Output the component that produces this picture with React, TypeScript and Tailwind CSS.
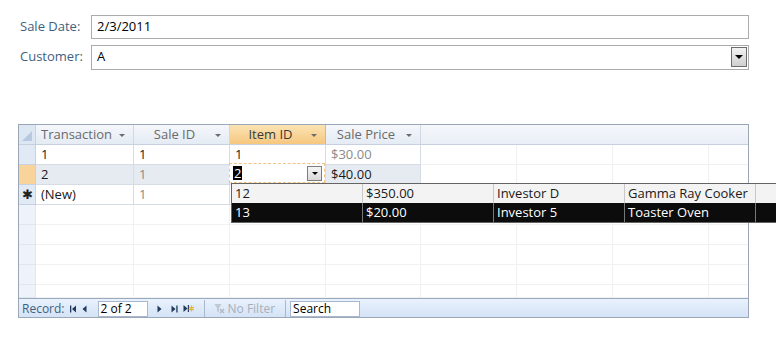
import React from "react";

const font = { fontFamily: '"Open Sans", "Noto Sans", sans-serif' };

function HeaderCell({ label, w, active, align = "center" }: { label: string; w: number; active?: boolean; align?: string }) {
  return (
    <div
      style={{ width: w }}
      className={`relative flex h-full shrink-0 items-center border-r ${active ? "border-[#e8b466] bg-gradient-to-b from-[#fbe3b4] to-[#f6c77e] text-[#3a3a3a]" : "border-[#d0d8e4] bg-gradient-to-b from-[#f4f7fb] to-[#e5ebf4] text-[#6a6a6a]"} ${align === "left" ? "justify-start pl-[5px]" : "justify-center pr-[14px]"}`}
    >
      <span>{label}</span>
      <span className="absolute right-[8px] top-[9px] h-0 w-0 border-x-[3px] border-t-[3px] border-x-transparent border-t-[#6a6a6a]" />
    </div>
  );
}

const cols = [98, 96, 96, 95];
const extra = [96, 96, 96, 40];

function DataRow({ vals, bg, selector, grey }: { vals: React.ReactNode[]; bg: string; selector: React.ReactNode; grey?: boolean[] }) {
  return (
    <div className="flex h-[20px] shrink-0">
      {selector}
      {cols.map((w, i) => (
        <div
          key={i}
          style={{ width: w }}
          className={`flex shrink-0 items-center border-b border-r border-[#d6dce6] pl-[5px] ${bg} ${grey && grey[i] ? "text-[#8a8a8a]" : "text-[#1a1a1a]"}`}
        >
          {vals[i]}
        </div>
      ))}
      {extra.map((w, i) => (
        <div key={i} style={{ width: w }} className="shrink-0 border-b border-r border-[#f0f0f0] bg-white" />
      ))}
    </div>
  );
}

function Sel({ kind }: { kind?: "active" | "new" }) {
  return (
    <div
      className={`flex h-full w-[17px] shrink-0 items-center justify-center border-b border-r border-[#c6d2e3] ${kind === "active" ? "bg-[#f8d49a]" : "bg-[#e1e9f5]"} text-[13px] text-[#222]`}
    >
      {kind === "new" ? "✱" : ""}
    </div>
  );
}

function BlankRow({ last }: { last?: boolean }) {
  return (
    <div className={`flex ${last ? "h-[13px]" : "h-[20px]"} shrink-0`}>
      <div className="h-full w-[17px] shrink-0 border-b border-r border-[#dfe6f0] bg-[#eef2f9]" />
      {[...cols, ...extra].map((w, i) => (
        <div key={i} style={{ width: w }} className="h-full shrink-0 border-b border-r border-[#f1f1f1] bg-white" />
      ))}
    </div>
  );
}

const navC = "#1f3a5c";

export default function App() {
  return (
    <div className="relative h-[343px] w-[776px] overflow-hidden bg-white text-[13px]" style={font}>
      <div className="flex flex-col gap-[6px] pl-[20px] pt-[15px]">
        <div className="flex h-[24px] items-center">
          <div className="w-[71px] text-[#3f5f80]">Sale Date:</div>
          <div className="flex h-[24px] w-[658px] items-center border border-[#ababab] pl-[5px] text-black">2/3/2011</div>
        </div>
        <div className="flex h-[24px] items-center">
          <div className="w-[71px] text-[#3f5f80]">Customer:</div>
          <div className="flex h-[25px] w-[658px] items-center justify-between border border-[#ababab] pl-[5px] pr-[1px] text-black">
            <span>A</span>
            <div className="flex h-[20px] w-[16px] items-center justify-center border border-[#6d6d6d] bg-gradient-to-b from-[#f2f2f2] to-[#cfcfcf]">
              <span className="h-0 w-0 border-x-[4px] border-t-[4px] border-x-transparent border-t-black" />
            </div>
          </div>
        </div>
      </div>

      <div className="ml-[18px] mt-[55px] flex h-[194px] w-[731px] flex-col overflow-hidden border border-[#9ba7b6] bg-white">
        <div className="flex h-[20px] shrink-0 border-b border-[#c6d0de]">
          <div className="relative h-full w-[17px] shrink-0 border-r border-[#c6d2e3] bg-[#dde6f3]">
            <svg className="absolute bottom-[3px] right-[3px]" width="10" height="10" viewBox="0 0 10 10">
              <path d="M10 0 L10 10 L0 10 Z" fill="#b7c8e0" />
            </svg>
          </div>
          <HeaderCell label="Transaction" w={98} align="left" />
          <HeaderCell label="Sale ID" w={96} />
          <HeaderCell label="Item ID" w={96} active />
          <HeaderCell label="Sale Price" w={95} />
          <div className="h-full flex-1 bg-gradient-to-b from-[#f4f7fb] to-[#eaeff7]" />
        </div>
        <DataRow selector={<Sel />} bg="bg-white" vals={["1", "1", "1", "$30.00"]} grey={[false, false, false, true]} />
        <DataRow selector={<Sel kind="active" />} bg="bg-[#e6eaf1]" vals={["2", "1", null, "$40.00"]} grey={[false, true, false, false]} />
        <DataRow selector={<Sel kind="new" />} bg="bg-white" vals={["(New)", "1", "", ""]} grey={[false, true, false, false]} />
        <BlankRow />
        <BlankRow />
        <BlankRow />
        <BlankRow />
        <BlankRow last />
        <div className="flex h-[20px] shrink-0 items-center border-t border-[#9aabc0] bg-gradient-to-b from-[#e9f2fd] to-[#d3e2f6] text-[12px] text-[#3f5f80]">
          <span className="ml-[3px]">Record:</span>
          <svg className="ml-[5px]" width="7" height="8" viewBox="0 0 7 8">
            <rect x="0" y="0.5" width="1.3" height="7" fill={navC} />
            <path d="M6 0.5 L6 7.5 L2 4 Z" fill={navC} />
          </svg>
          <svg className="ml-[5px]" width="5" height="8" viewBox="0 0 5 8">
            <path d="M4.5 0.5 L4.5 7.5 L0.5 4 Z" fill={navC} />
          </svg>
          <div className="ml-[11px] flex h-[16px] w-[50px] items-center border border-[#a9b8cc] bg-white pl-[2px] text-black">2 of 2</div>
          <svg className="ml-[9px]" width="5" height="8" viewBox="0 0 5 8">
            <path d="M0.5 0.5 L0.5 7.5 L4.5 4 Z" fill={navC} />
          </svg>
          <svg className="ml-[9px]" width="7" height="8" viewBox="0 0 7 8">
            <path d="M0.5 0.5 L0.5 7.5 L4.5 4 Z" fill={navC} />
            <rect x="5.3" y="0.5" width="1.3" height="7" fill={navC} />
          </svg>
          <svg className="ml-[5px]" width="11" height="9" viewBox="0 0 11 9">
            <path d="M0.5 1 L0.5 8 L4.5 4.5 Z" fill={navC} />
            <rect x="4.8" y="1" width="1.2" height="7" fill={navC} />
            <path d="M8.5 1.5 L8.5 7.5 M5.8 3 L11 6 M5.8 6 L11 3" stroke="#e9b52e" strokeWidth="1.3" />
          </svg>
          <div className="ml-[10px] h-[18px] w-px bg-[#a9b8cc]" />
          <svg className="ml-[9px]" width="11" height="11" viewBox="0 0 11 11">
            <path d="M0.5 1 L7.5 1 L5 5 L5 9.5 L3 8 L3 5 Z" fill="#c2c9d3" />
            <path d="M6 6 L10 10 M10 6 L6 10" stroke="#b0b8c4" strokeWidth="1.4" />
          </svg>
          <span className="ml-[3px] text-[#a7afba]">No Filter</span>
          <div className="ml-[10px] h-[18px] w-px bg-[#a9b8cc]" />
          <div className="ml-[4px] flex h-[16px] w-[70px] items-center border border-[#a9b8cc] bg-white pl-[2px] text-black">Search</div>
        </div>
      </div>

      {/* active Item ID cell editor */}
      <div className="absolute left-[229px] top-[163px] flex h-[20px] w-[96px] items-center border border-dashed border-[#f0c486] bg-white pl-[3px]">
        <span className="bg-black px-[1px] leading-[14px] text-white">2</span>
        <div className="absolute right-[2px] top-[2px] flex h-[15px] w-[15px] items-center justify-center border border-[#7d7d7d] bg-gradient-to-b from-[#f6f6f6] to-[#d8d8d8]">
          <span className="h-0 w-0 border-x-[3px] border-t-[3px] border-x-transparent border-t-black" />
        </div>
      </div>

      {/* dropdown list */}
      <div className="absolute left-[231px] top-[183px] flex w-[560px] flex-col border border-[#646464] bg-white text-[13px]">
        <div className="flex h-[19px] bg-[#f3f3f3] text-[#1a1a1a]">
          {["12", "$350.00", "Investor D", "Gamma Ray Cooker", ""].map((t, i) => (
            <div key={i} className="flex w-[131px] shrink-0 items-center border-r border-[#c8c8c8] pl-[3px]">{t}</div>
          ))}
        </div>
        <div className="flex h-[19px] bg-[#0c0c0c] text-white">
          {["13", "$20.00", "Investor 5", "Toaster Oven", ""].map((t, i) => (
            <div key={i} className="flex w-[131px] shrink-0 items-center border-r border-[#777] pl-[3px]">{t}</div>
          ))}
        </div>
      </div>
    </div>
  );
}
